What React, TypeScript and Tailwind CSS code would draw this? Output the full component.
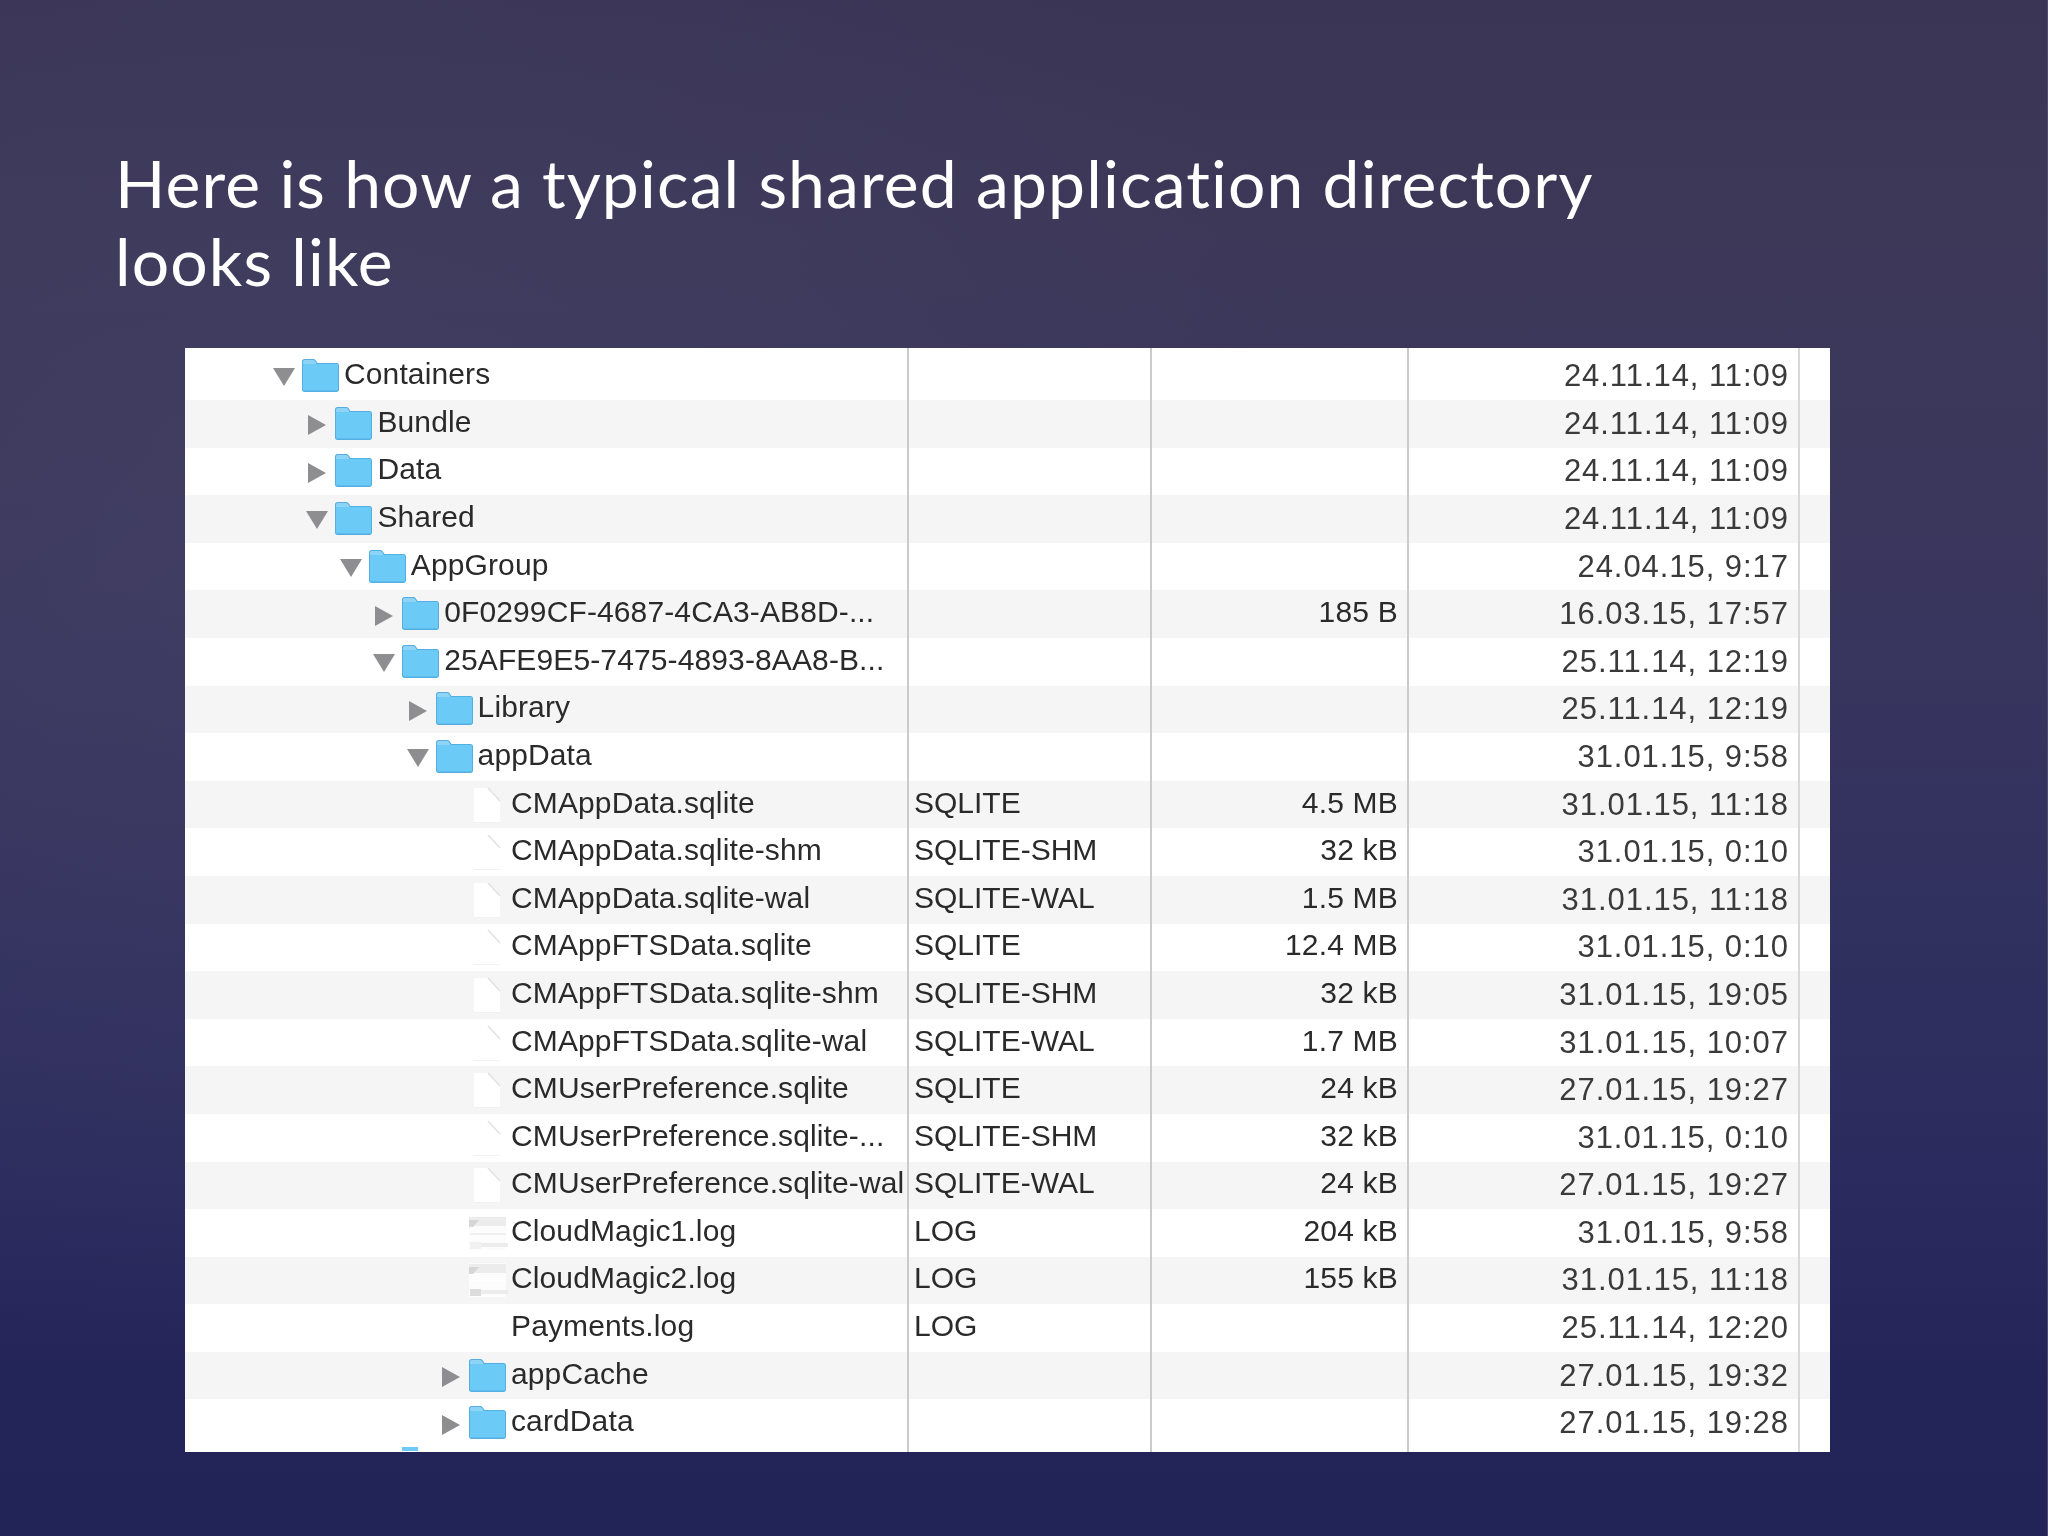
const LEVEL = ['pl-[88px]', 'pl-[121.4px]', 'pl-[154.8px]', 'pl-[188.2px]', 'pl-[221.6px]', 'pl-[255px]'];

type Row = {
  n: string;
  l: number;
  t: 'open' | 'closed' | 'file' | 'log' | 'none';
  k?: string;
  s?: string;
  d: string;
};

const ROWS: Row[] = [
  { n: 'Containers', l: 0, t: 'open', d: '24.11.14, 11:09' },
  { n: 'Bundle', l: 1, t: 'closed', d: '24.11.14, 11:09' },
  { n: 'Data', l: 1, t: 'closed', d: '24.11.14, 11:09' },
  { n: 'Shared', l: 1, t: 'open', d: '24.11.14, 11:09' },
  { n: 'AppGroup', l: 2, t: 'open', d: '24.04.15, 9:17' },
  { n: '0F0299CF-4687-4CA3-AB8D-...', l: 3, t: 'closed', s: '185 B', d: '16.03.15, 17:57' },
  { n: '25AFE9E5-7475-4893-8AA8-B...', l: 3, t: 'open', d: '25.11.14, 12:19' },
  { n: 'Library', l: 4, t: 'closed', d: '25.11.14, 12:19' },
  { n: 'appData', l: 4, t: 'open', d: '31.01.15, 9:58' },
  { n: 'CMAppData.sqlite', l: 5, t: 'file', k: 'SQLITE', s: '4.5 MB', d: '31.01.15, 11:18' },
  { n: 'CMAppData.sqlite-shm', l: 5, t: 'file', k: 'SQLITE-SHM', s: '32 kB', d: '31.01.15, 0:10' },
  { n: 'CMAppData.sqlite-wal', l: 5, t: 'file', k: 'SQLITE-WAL', s: '1.5 MB', d: '31.01.15, 11:18' },
  { n: 'CMAppFTSData.sqlite', l: 5, t: 'file', k: 'SQLITE', s: '12.4 MB', d: '31.01.15, 0:10' },
  { n: 'CMAppFTSData.sqlite-shm', l: 5, t: 'file', k: 'SQLITE-SHM', s: '32 kB', d: '31.01.15, 19:05' },
  { n: 'CMAppFTSData.sqlite-wal', l: 5, t: 'file', k: 'SQLITE-WAL', s: '1.7 MB', d: '31.01.15, 10:07' },
  { n: 'CMUserPreference.sqlite', l: 5, t: 'file', k: 'SQLITE', s: '24 kB', d: '27.01.15, 19:27' },
  { n: 'CMUserPreference.sqlite-...', l: 5, t: 'file', k: 'SQLITE-SHM', s: '32 kB', d: '31.01.15, 0:10' },
  { n: 'CMUserPreference.sqlite-wal', l: 5, t: 'file', k: 'SQLITE-WAL', s: '24 kB', d: '27.01.15, 19:27' },
  { n: 'CloudMagic1.log', l: 5, t: 'log', k: 'LOG', s: '204 kB', d: '31.01.15, 9:58' },
  { n: 'CloudMagic2.log', l: 5, t: 'log', k: 'LOG', s: '155 kB', d: '31.01.15, 11:18' },
  { n: 'Payments.log', l: 5, t: 'none', k: 'LOG', d: '25.11.14, 12:20' },
  { n: 'appCache', l: 5, t: 'closed', d: '27.01.15, 19:32' },
  { n: 'cardData', l: 5, t: 'closed', d: '27.01.15, 19:28' },
];

function Folder() {
  return (
    <svg width="37" height="33" viewBox="0 0 37 33" className="block shrink-0 -mt-[1px]">
      <path d="M0 2.5C0 1 1 0 2.5 0H11.5C13 0 13.5 1 14.5 2.5L15.5 4H34.5C36 4 37 5 37 6.5V30.5C37 32 36 33 34.5 33H2.5C1 33 0 32 0 30.5Z" fill="#54aee2" />
      <path d="M1 3C1 2 1.5 1 2.5 1H11C12.5 1 13 2 14 3.5L14.5 5H1Z" fill="#8ed4f6" />
      <path d="M1 6.5C1 5.5 1.5 5 2.5 5H34.5C35.5 5 36 5.5 36 6.5V30C36 31 35.5 31.5 34.5 31.5H2.5C1.5 31.5 1 31 1 30Z" fill="#6ccaf6" />
    </svg>
  );
}

function Tri({ open }: { open: boolean }) {
  return open ? (
    <svg width="22" height="18" viewBox="0 0 22 18" className="block mt-[2px]">
      <path d="M0 0H22L11 18Z" fill="#8e8e90" />
    </svg>
  ) : (
    <svg width="18" height="20" viewBox="0 0 18 20" className="block ml-[2px] mt-[3px]">
      <path d="M0 0L18 10L0 20Z" fill="#8e8e90" />
    </svg>
  );
}

function FileIcon() {
  return (
    <svg width="28" height="36" viewBox="0 0 28 36" className="block ml-[4px]">
      <path d="M1 1H15L27 14V35H1Z" fill="#ffffff" />
      <path d="M1 35.5H27" stroke="#f1f1f1" strokeWidth="1" />
      <path d="M15 1L27 14" stroke="#e2e2e3" strokeWidth="1.5" />
    </svg>
  );
}

function LogIcon({ second }: { second: boolean }) {
  return (
    <svg width="39" height="34" viewBox="0 0 39 34" className="block">
      <rect x="0" y="0" width="37" height="34" fill="#fcfcfc" />
      <rect x="0" y="1" width="37" height="9" fill="#ececed" />
      <path d="M0 4H10L4 11H0Z" fill="#d6d6d7" />
      <rect x="1" y="17" width="36" height="2" fill={second ? '#ffffff' : '#f0f0f1'} />
      <rect x="1" y="26" width="11" height="7" fill={second ? '#dcdcdd' : '#f1f1f2'} />
      <rect x="12" y="27" width="27" height="4" fill="#ececed" />
    </svg>
  );
}

function TableRow({ r, i }: { r: Row; i: number }) {
  const isFolder = r.t === 'open' || r.t === 'closed';
  return (
    <div
      className={
        'flex ' +
        (i === 0 ? 'h-[52px] pt-[4.4px] ' : 'h-[47.6px] ') +
        (i % 2 === 1 ? 'bg-[#f5f5f6]' : 'bg-white')
      }
    >
      <div className={'w-[722px] flex items-center whitespace-nowrap tracking-[0.12px] ' + LEVEL[r.l]}>
        <div className="w-[29px] shrink-0">{isFolder && <Tri open={r.t === 'open'} />}</div>
        <div className="w-[37px] shrink-0">
          {isFolder && <Folder />}
          {r.t === 'file' && <FileIcon />}
          {r.t === 'log' && <LogIcon second={r.n === 'CloudMagic2.log'} />}
        </div>
        <span className="ml-[5px] pb-[4px]">{r.n}</span>
      </div>
      <div className="w-[243px] pl-[7px] flex items-center">
        <span className="pb-[4px]">{r.k}</span>
      </div>
      <div className="w-[257px] pr-[9px] flex items-center justify-end tracking-[0.2px]">
        <span className="pb-[4px]">{r.s}</span>
      </div>
      <div className="w-[391px] pr-[9px] flex items-center justify-end tracking-[0.95px] text-[31px] text-[#3a3a3a]">
        <span className="pb-[1px]">{r.d}</span>
      </div>
      <div className="flex-1" />
    </div>
  );
}

export default function App() {
  return (
    <div className="w-[2048px] h-[1536px] overflow-hidden border-r border-[#4f4d6c] font-['Lato',sans-serif] bg-[radial-gradient(ellipse_1100px_800px_at_300px_560px,#45426699_0%,#45426600_100%),linear-gradient(180deg,#3a3555_0%,#3d3858_15%,#39365e_40%,#30305f_62%,#2a2a5e_78%,#232458_90%,#222457_100%)]">
      <div className="pt-[144px] pl-[115px]">
        <h1 className="text-[66px] leading-[78px] text-white font-normal tracking-[1.15px] w-[1600px]">
          Here is how a typical shared application directory
          <br />
          looks like
        </h1>
      </div>
      <div className="mt-[48px] ml-[185px] w-[1645px] h-[1104px] relative bg-white text-[30px] leading-none text-[#2a2a2a] font-['Liberation_Sans',sans-serif] blur-[0.75px] overflow-hidden">
        {ROWS.map((r, i) => (
          <TableRow key={r.n + i} r={r} i={i} />
        ))}
        <div className="h-[4px] pl-[217px]">
          <div className="w-[16px] h-[4px] bg-[#6ccaf6]" />
        </div>
        <div className="absolute top-0 bottom-0 left-[722px] w-[2px] bg-[#cbcbce]" />
        <div className="absolute top-0 bottom-0 left-[965px] w-[2px] bg-[#cbcbce]" />
        <div className="absolute top-0 bottom-0 left-[1222px] w-[2px] bg-[#cbcbce]" />
        <div className="absolute top-0 bottom-0 left-[1613px] w-[2px] bg-[#d8d8da]" />
      </div>
    </div>
  );
}
